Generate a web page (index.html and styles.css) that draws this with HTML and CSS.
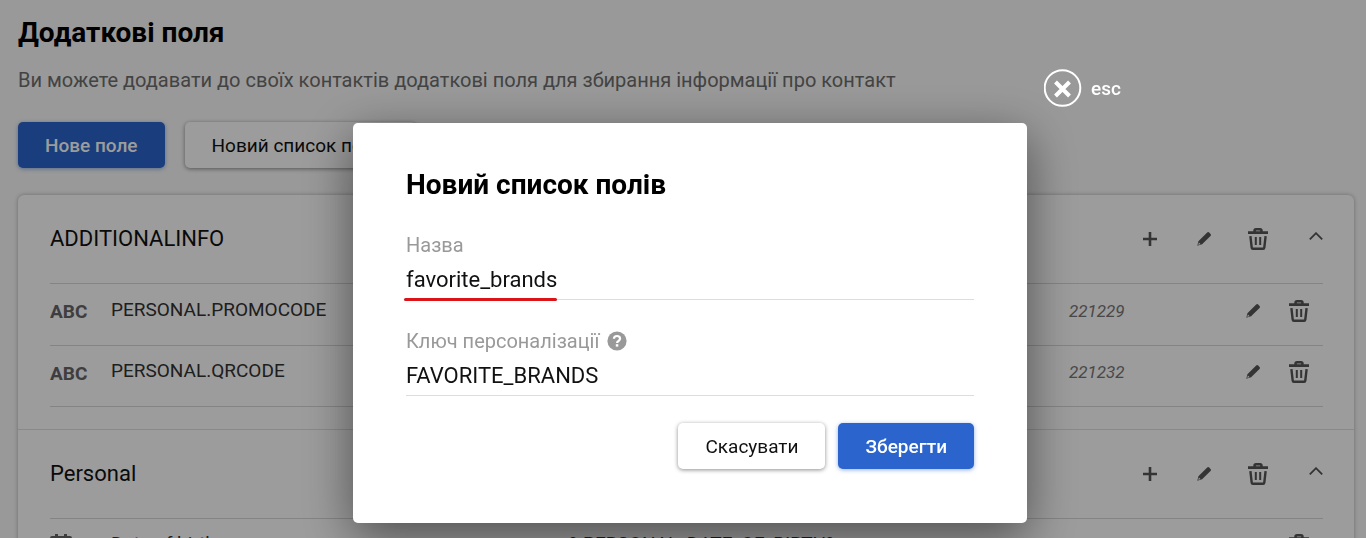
FILE: index.html
```html
<!DOCTYPE html>
<html lang="uk">
<head>
	<meta charset="utf-8">
	<meta name="viewport" content="width=device-width, initial-scale=1">
	<title>Додаткові поля</title>
	<link rel="stylesheet" href="styles.css">
</head>
<body>
	<!-- icons -->
	<svg class="sprite" aria-hidden="true">
		<symbol id="plus" viewBox="0 0 14 14">
			<path d="M7 0v14M0 7h14" fill="none" stroke="currentColor" stroke-width="2.6"/>
		</symbol>
		<symbol id="pencil" viewBox="0 0 14 14">
			<path fill="currentColor" fill-rule="evenodd" d="M10.2.6a1.4 1.4 0 0 1 2 0l1.3 1.3a1.4 1.4 0 0 1 0 2L5.1 12.2.3 13.8 1.4 9.2zM1.9 10.6l-.6 2.3 2.2-.8z"/>
		</symbol>
		<symbol id="trash" viewBox="0 0 20 22">
			<g fill="none" stroke="currentColor" stroke-width="2.4" stroke-linejoin="round">
				<path d="M0 4.6h20M6.6 4V2.6q0-1.3 1.3-1.3h4.2q1.3 0 1.3 1.3V4" stroke-width="2.6"/>
				<path d="M2.4 8.2l1.3 11.4q.1 1.1 1.2 1.1h10.2q1.1 0 1.2-1.1l1.3-11.4"/>
				<path d="M7.8 9v8M12.2 9v8" stroke-width="2"/>
			</g>
		</symbol>
		<symbol id="chevron" viewBox="0 0 14 8">
			<path d="M.8 7.4 7 1.2l6.2 6.2" fill="none" stroke="currentColor" stroke-width="1.8"/>
		</symbol>
		<symbol id="calendar" viewBox="0 0 22 24">
			<path fill="currentColor" fill-rule="evenodd" d="M5 0h3v2h6V0h3v2h3q2 0 2 2v18q0 2-2 2H2q-2 0-2-2V4q0-2 2-2h3zM2 8v14h18V8z"/>
		</symbol>
	</svg>

	<main class="page">
		<h1 class="title">Додаткові поля</h1>
		<p class="subtitle">Ви можете додавати до своїх контактів додаткові поля для збирання інформації про контакт</p>
		<div class="toolbar">
			<button class="btn btn-primary">Нове поле</button>
			<button class="btn">Новий список полів</button>
		</div>

		<div class="card">
			<section class="group">
				<header class="group-head">
					<h2 class="group-name">ADDITIONALINFO</h2>
					<div class="actions">
						<button class="icon-btn" aria-label="Додати"><svg class="ico"><use href="#plus"/></svg></button>
						<button class="icon-btn" aria-label="Редагувати"><svg class="ico"><use href="#pencil"/></svg></button>
						<button class="icon-btn" aria-label="Видалити"><svg class="ico-trash"><use href="#trash"/></svg></button>
						<button class="icon-btn toggle" aria-label="Згорнути"><svg class="ico-chevron"><use href="#chevron"/></svg></button>
					</div>
				</header>
				<div class="field">
					<span class="type">ABC</span>
					<span class="name">PERSONAL.PROMOCODE</span>
					<span class="key"></span>
					<div class="field-end">
						<span class="id">221229</span>
						<button class="icon-btn" aria-label="Редагувати"><svg class="ico"><use href="#pencil"/></svg></button>
						<button class="icon-btn" aria-label="Видалити"><svg class="ico-trash"><use href="#trash"/></svg></button>
					</div>
				</div>
				<div class="field">
					<span class="type">ABC</span>
					<span class="name">PERSONAL.QRCODE</span>
					<span class="key"></span>
					<div class="field-end">
						<span class="id">221232</span>
						<button class="icon-btn" aria-label="Редагувати"><svg class="ico"><use href="#pencil"/></svg></button>
						<button class="icon-btn" aria-label="Видалити"><svg class="ico-trash"><use href="#trash"/></svg></button>
					</div>
				</div>
			</section>
			<section class="group">
				<header class="group-head">
					<h2 class="group-name">Personal</h2>
					<div class="actions">
						<button class="icon-btn" aria-label="Додати"><svg class="ico"><use href="#plus"/></svg></button>
						<button class="icon-btn" aria-label="Редагувати"><svg class="ico"><use href="#pencil"/></svg></button>
						<button class="icon-btn" aria-label="Видалити"><svg class="ico-trash"><use href="#trash"/></svg></button>
						<button class="icon-btn toggle" aria-label="Згорнути"><svg class="ico-chevron"><use href="#chevron"/></svg></button>
					</div>
				</header>
				<div class="field">
					<span class="type"><svg class="ico-calendar"><use href="#calendar"/></svg></span>
					<span class="name">Date of birth</span>
					<span class="key">%PERSONAL_DATE_OF_BIRTH%</span>
					<div class="field-end">
						<span class="id"></span>
						<button class="icon-btn" aria-label="Редагувати"><svg class="ico"><use href="#pencil"/></svg></button>
						<button class="icon-btn" aria-label="Видалити"><svg class="ico-trash"><use href="#trash"/></svg></button>
					</div>
				</div>
			</section>
		</div>
	</main>

	<div class="overlay">
		<div class="modal" role="dialog" aria-labelledby="modal-title">
			<button class="close">
				<svg class="close-ico" viewBox="0 0 38 38" aria-hidden="true">
					<circle cx="18.500" cy="19" r="17.8" fill="none" stroke="#fff" stroke-width="2"/>
					<path d="M11.500 13l14 14M25.500 13l-14 14" stroke="#fff" stroke-width="4"/>
				</svg>
				esc
			</button>
			<h2 class="modal-title" id="modal-title">Новий список полів</h2>
			<form>
				<div class="form-row marked">
					<label for="list-name">Назва</label>
					<input type="text" id="list-name" value="favorite_brands">
				</div>
				<div class="form-row">
					<label for="list-key">Ключ персоналізації
						<svg class="help" viewBox="0 0 20 20" aria-hidden="true">
							<circle cx="10" cy="10" r="9.6" fill="#999"/>
							<path d="M6.9 7.8Q7 5 10 5t3.1 2.6q0 1.4-1.6 2.4-1.4.8-1.4 2" fill="none" stroke="#fff" stroke-width="2.2"/>
							<path d="M8.8 13.2h2.5v2.4H8.800z" fill="#fff"/>
						</svg>
					</label>
					<input type="text" id="list-key" value="FAVORITE_BRANDS">
				</div>
				<div class="form-btns">
					<button type="button" class="btn">Скасувати</button>
					<button type="submit" class="btn btn-primary">Зберегти</button>
				</div>
			</form>
		</div>
	</div>
</body>
</html>
```
FILE: styles.css
```css
*{
	margin: 0;
	padding: 0;
	box-sizing: border-box;
	font-family: Roboto, Arial, sans-serif;
}
body{
	background: #fafafa;
	color: #111;
	height: 100vh;
	overflow: hidden;
}
.sprite{
	display: none;
}
svg{
	display: block;
}
button{
	border: none;
	background: none;
	cursor: pointer;
}
.page{
	padding: 15px 12px 0 18px;
}
.title{
	font-size: 28px;
	line-height: 36px;
	font-weight: 700;
	color: #000;
}
.subtitle{
	margin-top: 17px;
	font-size: 20px;
	line-height: 24px;
	color: #6e6e6e;
}
.toolbar{
	display: flex;
	gap: 20px;
	margin-top: 30px;
}
.btn{
	height: 46px;
	padding: 0 27px;
	border-radius: 5px;
	background: #fff;
	box-shadow: 0 1px 4px rgba(0, 0, 0, .45);
	font-size: 19px;
	color: #111;
}
.btn-primary{
	background: #2a64cc;
	color: #fff;
	font-weight: 500;
	box-shadow: 0 1px 4px rgba(42, 100, 204, .5);
}
.card{
	margin-top: 27px;
	background: #fff;
	border-radius: 6px;
	box-shadow: 0 0 4px rgba(0, 0, 0, .3);
}
.group{
	padding: 0 31px 22px 32px;
	border-bottom: 1px solid #e0e0e0;
}
.group-head{
	display: flex;
	justify-content: space-between;
	align-items: center;
	height: 88px;
}
.group-name{
	padding-bottom: 2px;
	font-size: 22px;
	font-weight: 400;
}
.actions{
	display: flex;
	align-items: center;
	gap: 30px;
}
.icon-btn{
	display: flex;
	justify-content: center;
	width: 24px;
	color: #555;
}
.toggle{
	width: 14px;
	margin: 0 0 6px 9px;
}
.ico{
	width: 14px;
	height: 14px;
}
.ico-trash{
	width: 20px;
	height: 22px;
}
.ico-chevron{
	width: 14px;
	height: 8px;
}
.ico-calendar{
	width: 22px;
	height: 24px;
}
.field{
	display: grid;
	grid-template-columns: 61px 11fr 12fr 254px;
	align-items: center;
	height: 62px;
	padding-bottom: 8px;
	border-top: 1px solid #d8d8d8;
	font-size: 19px;
	color: #333;
}
.field:last-child{
	border-bottom: 1px solid #d8d8d8;
}
.type{
	padding-top: 2px;
	font-weight: 700;
	color: #666;
}
.name,
.key{
	padding-bottom: 3px;
}
.field-end{
	display: flex;
	align-items: center;
	gap: 22px;
	padding-right: 12px;
}
.id{
	flex: 1;
	font-size: 17px;
	font-style: italic;
	color: #777;
}
.overlay{
	position: fixed;
	inset: 0;
	display: flex;
	justify-content: center;
	align-items: flex-start;
	padding: 123px 0 0 14px;
	background: rgba(0, 0, 0, .39);
}
.modal{
	position: relative;
	width: 100%;
	max-width: 674px;
	padding: 44px 53px 54px;
	background: #fff;
	border-radius: 5px;
	box-shadow: 0 14px 50px rgba(0, 0, 0, .5);
}
.close{
	position: absolute;
	left: 100%;
	top: -54px;
	margin-left: 17px;
	display: flex;
	align-items: center;
	gap: 9px;
	font-size: 19px;
	font-weight: 500;
	color: #fff;
}
.close-ico{
	width: 38px;
	height: 38px;
}
.modal-title{
	margin-bottom: 30px;
	font-size: 28px;
	line-height: 36px;
	font-weight: 700;
	color: #000;
}
.form-row{
	position: relative;
}
.form-row + .form-row{
	margin-top: 29px;
}
.form-row label{
	display: flex;
	align-items: center;
	gap: 8px;
	font-size: 20px;
	line-height: 24px;
	color: #999;
}
.form-row input{
	display: block;
	width: 100%;
	height: 43px;
	padding-top: 2px;
	border: none;
	border-bottom: 1px solid #ddd;
	outline: none;
	font-size: 22px;
	color: #111;
}
/* red underline below the typed value */
.marked:after{
	content: "";
	position: absolute;
	left: -2px;
	bottom: -1px;
	width: 153px;
	height: 3px;
	border-radius: 2px;
	background: #dc1418;
}
.help{
	width: 20px;
	height: 20px;
}
.form-btns{
	display: flex;
	justify-content: flex-end;
	gap: 13px;
	margin-top: 27px;
}
```
